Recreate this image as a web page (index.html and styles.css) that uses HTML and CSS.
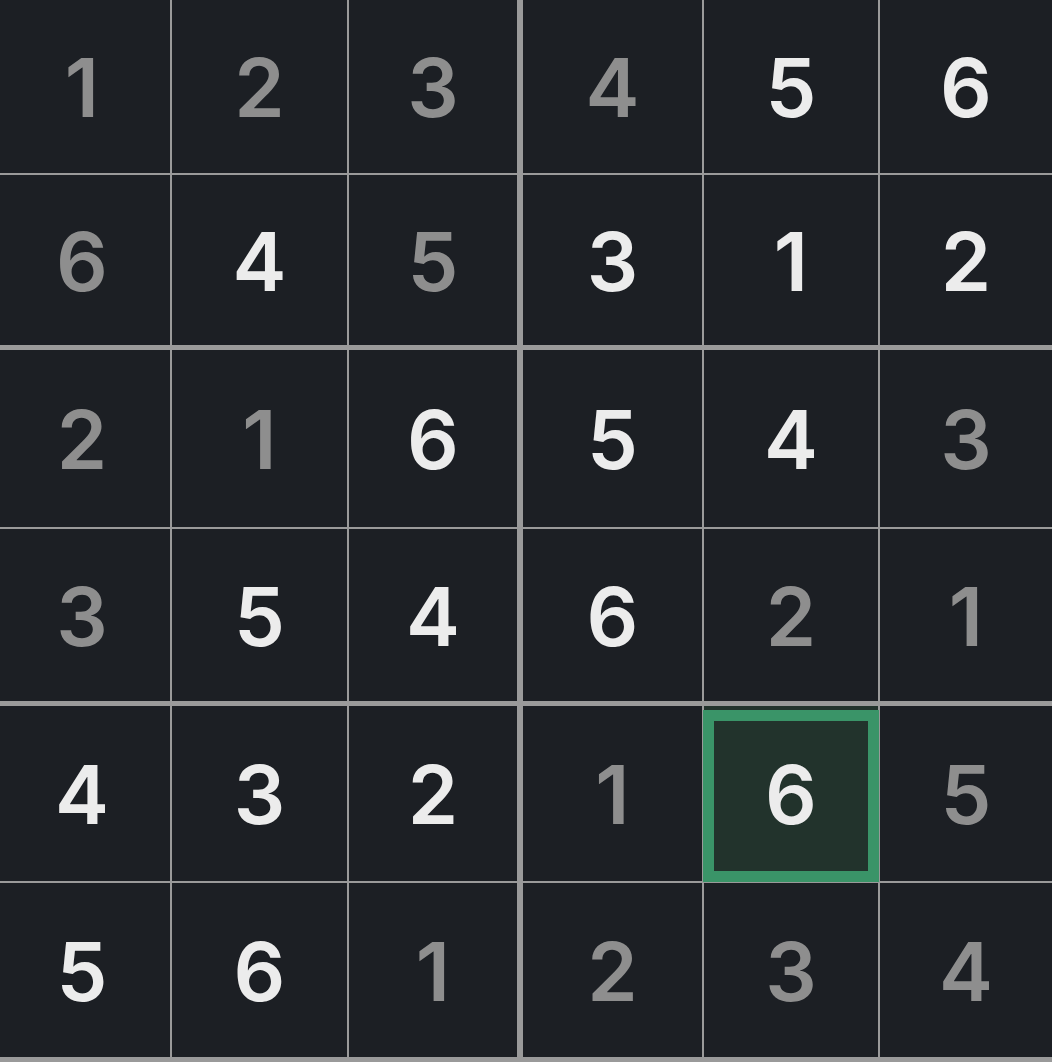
FILE: index.html
```html
<!DOCTYPE html>
<html>
<head>
<meta charset="utf-8">
<link rel="stylesheet" href="styles.css">
</head>
<body>
<div class="board">
  <div class="cell first g">1</div><div class="cell g">2</div><div class="cell g b3">3</div><div class="cell g">4</div><div class="cell w">5</div><div class="cell w last">6</div>
  <div class="cell first g rb">6</div><div class="cell w rb">4</div><div class="cell g b3 rb">5</div><div class="cell w rb">3</div><div class="cell w rb">1</div><div class="cell w last rb">2</div>
  <div class="cell first g">2</div><div class="cell g">1</div><div class="cell w b3">6</div><div class="cell w">5</div><div class="cell w">4</div><div class="cell g last">3</div>
  <div class="cell first g rb">3</div><div class="cell w rb">5</div><div class="cell w b3 rb">4</div><div class="cell w rb">6</div><div class="cell g rb">2</div><div class="cell g last rb">1</div>
  <div class="cell first w">4</div><div class="cell w">3</div><div class="cell w b3">2</div><div class="cell g">1</div><div class="cell w sel">6</div><div class="cell g last">5</div>
  <div class="cell first w rb">5</div><div class="cell w rb">6</div><div class="cell g b3 rb">1</div><div class="cell g rb">2</div><div class="cell g rb">3</div><div class="cell g last rb">4</div>
</div>
</body>
</html>
```
FILE: styles.css
```css
html, body {
  margin: 0;
  padding: 0;
  background: #1c1f24;
}
.board {
  display: grid;
  grid-template-columns: 172px 177px 174px 181px 176px 172px;
  grid-template-rows: 175px 175px 179px 177px 177px 179px;
  width: 1052px;
  height: 1062px;
  overflow: hidden;
  font-family: Inter, "Noto Sans", sans-serif;
  font-size: 81px;
  font-weight: 600;
}
.cell {
  box-sizing: border-box;
  display: flex;
  align-items: center;
  justify-content: center;
  padding-top: 4px;
  background: #1c1f24;
  border-right: 2px solid #9a9a9a;
  border-bottom: 2px solid #9a9a9a;
  position: relative;
  line-height: 1;
}
.cell.first { padding-right: 6px; }
.cell.b3 { border-right-width: 6px; }
.cell.last { border-right: 0; }
.cell.rb { border-bottom-width: 5px; }
.g { color: #8e8e8e; }
.w { color: #ececec; }
.sel { background: #22332c; z-index: 1; }
.sel::before {
  content: "";
  position: absolute;
  top: 4px;
  left: -1px;
  right: -1px;
  bottom: -1px;
  border: 11px solid #3a9468;
  box-sizing: border-box;
}
```
